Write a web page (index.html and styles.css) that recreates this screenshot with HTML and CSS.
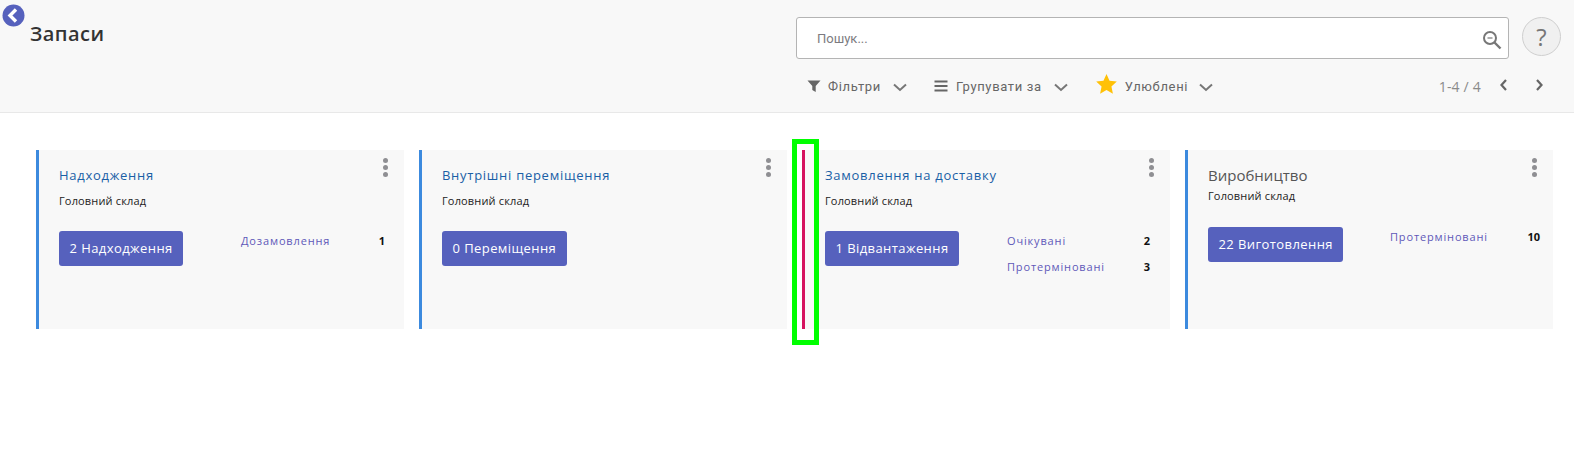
FILE: index.html
```html
<!DOCTYPE html>
<html lang="uk">
<head>
<meta charset="utf-8">
<title>Запаси</title>
<link rel="stylesheet" href="styles.css">
</head>
<body>
<header class="cp">
  <div class="cp-left">
    <svg class="back" viewBox="0 0 23 23" width="23" height="23"><circle cx="11.5" cy="11.5" r="11" fill="#5661bd"/><path d="M14 5.5 L8 11.5 L14 17.5" fill="none" stroke="#fff" stroke-width="3.4" stroke-linejoin="miter"/></svg>
    <h1 class="page-title">Запаси</h1>
  </div>
  <div class="cp-right">
    <div class="search-row">
      <div class="search">
        <span class="placeholder">Пошук...</span>
        <svg class="search-ico" viewBox="0 0 20 20" width="20" height="20"><circle cx="8" cy="8" r="6" fill="none" stroke="#777" stroke-width="2"/><path d="M5.5 8h5" stroke="#777" stroke-width="1.2"/><path d="M12.5 12.5 L18.5 18.5" stroke="#777" stroke-width="2.4"/></svg>
      </div>
      <div class="help">?</div>
    </div>
    <div class="tools">
      <div class="tool tool-filter">
        <svg viewBox="0 0 14 14" width="14" height="14"><path d="M0.5 1.5h13L8.7 7v6L5.3 11V7z" fill="#666"/></svg>
        <span>Фільтри</span>
        <svg class="caret" viewBox="0 0 14 9" width="14" height="9"><path d="M1 1.5 L7 7 L13 1.5" fill="none" stroke="#777" stroke-width="2"/></svg>
      </div>
      <div class="tool tool-group">
        <svg viewBox="0 0 14 12" width="14" height="12"><path d="M0.5 1.5h13M0.5 6h13M0.5 10.500h13" stroke="#666" stroke-width="2.200"/></svg>
        <span>Групувати за</span>
        <svg class="caret" viewBox="0 0 14 9" width="14" height="9"><path d="M1 1.5 L7 7 L13 1.5" fill="none" stroke="#777" stroke-width="2"/></svg>
      </div>
      <div class="tool tool-fav">
        <svg class="star" viewBox="0 0 20 19" width="21" height="20"><path d="M10 0 L12.900 6.400 L19.800 7.200 L14.700 11.900 L16.100 18.800 L10 15.300 L3.900 18.800 L5.300 11.900 L0.200 7.200 L7.100 6.400z" fill="#ffc107"/></svg>
        <span>Улюблені</span>
        <svg class="caret" viewBox="0 0 14 9" width="14" height="9"><path d="M1 1.5 L7 7 L13 1.5" fill="none" stroke="#777" stroke-width="2"/></svg>
      </div>
      <div class="pager">
        <span class="pager-text">1-4 / 4</span>
        <svg viewBox="0 0 9 12" width="9" height="12"><path d="M7 1 L2.500 6 L7 11" fill="none" stroke="#666" stroke-width="2.200"/></svg>
        <svg viewBox="0 0 9 12" width="9" height="12"><path d="M2 1 L6.500 6 L2 11" fill="none" stroke="#666" stroke-width="2.200"/></svg>
      </div>
    </div>
  </div>
</header>
<main class="board">
  <article class="card card-first">
    <div class="dots"><i></i><i></i><i></i></div>
    <div class="card-title link">Надходження</div>
    <div class="wh">Головний склад</div>
    <div class="card-body">
      <div class="btn-col"><a class="btn">2 Надходження</a></div>
      <div class="stats">
        <div class="stat"><span>Дозамовлення</span><b>1</b></div>
      </div>
    </div>
  </article>
  <article class="card">
    <div class="dots"><i></i><i></i><i></i></div>
    <div class="card-title link">Внутрішні переміщення</div>
    <div class="wh">Головний склад</div>
    <div class="card-body">
      <div class="btn-col"><a class="btn">0 Переміщення</a></div>
    </div>
  </article>
  <article class="card card-marked">
    <div class="dots"><i></i><i></i><i></i></div>
    <div class="card-title link">Замовлення на доставку</div>
    <div class="wh">Головний склад</div>
    <div class="card-body">
      <div class="btn-col"><a class="btn">1 Відвантаження</a></div>
      <div class="stats">
        <div class="stat"><span>Очікувані</span><b>2</b></div>
        <div class="stat"><span>Протерміновані</span><b>3</b></div>
      </div>
    </div>
    <div class="highlight"></div>
  </article>
  <article class="card card-plain">
    <div class="dots"><i></i><i></i><i></i></div>
    <div class="card-title plain">Виробництво</div>
    <div class="wh">Головний склад</div>
    <div class="card-body">
      <div class="btn-col"><a class="btn">22 Виготовлення</a></div>
      <div class="stats">
        <div class="stat"><span>Протерміновані</span><b>10</b></div>
      </div>
    </div>
  </article>
</main>
</body>
</html>
```
FILE: styles.css
```css
* { box-sizing: border-box; }
html, body { margin: 0; padding: 0; background: #fff; }
body { font-family: "Open Sans", "Noto Sans", sans-serif; color: #333; height: 457px; overflow: hidden; }

.cp {
  display: flex;
  height: 113px;
  background: #f8f8f8;
  border-bottom: 1px solid #e8e8e8;
}
.cp-left { position: relative; width: 796px; padding: 21px 0 0 30px; }
.back { position: absolute; left: 2px; top: 4px; display: block; }
.page-title { margin: 0; font-size: 20px; line-height: 26px; font-weight: 600; color: #333; letter-spacing: 0.45px; }

.cp-right { flex: 1; padding: 17px 13px 0 0; }
.search-row { display: flex; gap: 13px; }
.search {
  flex: 1;
  height: 42px;
  background: #fff;
  border: 1px solid #b4b4b4;
  border-radius: 3px;
  display: flex;
  align-items: center;
  justify-content: space-between;
  padding: 0 6px 0 20px;
}
.placeholder { font-family: Roboto, sans-serif; font-size: 13px; color: #7c7b80; letter-spacing: 0; }
.search-ico { margin-top: 4px; }
.help {
  width: 39px; height: 39px;
  border-radius: 50%;
  background: #f0f0f0;
  border: 1px solid #cfcfcf;
  display: flex; align-items: center; justify-content: center;
  font-family: "Open Sans", sans-serif; font-size: 24px; color: #777;
}
.tools { display: flex; align-items: center; height: 20px; margin-top: 17px; padding-left: 11px; font-family: Roboto, sans-serif; font-size: 13px; letter-spacing: 0.65px; color: #666; }
.tool { display: flex; align-items: center; }
.tool span { margin-left: 7px; }
.tool .caret { margin-left: 12px; margin-top: 2px; }
.tool-group { margin-left: 27px; }
.tool-group span { margin-left: 8px; }
.tool-fav { margin-left: 28px; }
.tool-fav span { margin-left: 8px; }
.tool-fav .caret { margin-left: 11px; }
.star { margin-top: -4px; }
.pager { margin-left: auto; display: flex; align-items: center; margin-right: 17px; }
.pager-text { font-family: "Open Sans", sans-serif; font-size: 14px; letter-spacing: 0.2px; color: #8a8a8a; margin-right: 18px; }
.pager svg { margin-top: -3px; }
.pager svg + svg { margin-left: 27px; }

.board {
  display: grid;
  grid-template-columns: repeat(4, 368px);
  column-gap: 15px;
  padding: 37px 0 0 36px;
}
.card {
  position: relative;
  height: 179px;
  background: #f8f8f8;
  border-left: 3px solid #3c8ade;
  padding: 0 20px;
}
.card-marked { border-left: 0; padding-left: 23px; }
.card-marked::before { content: ""; position: absolute; left: 0; top: 0; bottom: 0; width: 3px; background: #d6125f; }
.dots { position: absolute; top: 8px; right: 16px; display: flex; flex-direction: column; gap: 2px; }
.dots i { display: block; width: 5px; height: 5px; border-radius: 50%; background: #8f8f93; }
.card-title { padding-top: 15px; line-height: 20px; }
.link { font-size: 13px; letter-spacing: 0.72px; color: #1a5fa6; }
.plain { padding-top: 14px; font-size: 15px; color: #555; line-height: 22px; }
.wh { margin-top: 8px; font-size: 11px; line-height: 15px; letter-spacing: 0.15px; color: #222; }
.card-plain .wh { margin-top: 2px; }
.card-body { display: flex; margin-top: 23px; }
.card-plain .card-body { margin-top: 24px; }
.btn-col { flex: 0 0 182px; }
.btn {
  display: inline-block;
  height: 35px; line-height: 35px;
  padding: 0 10.5px;
  background: #5661bd;
  border-radius: 3px;
  color: #fff;
  font-size: 13px;
  font-weight: 500;
  letter-spacing: 0.42px;
}
.stats { flex: 1; display: flex; flex-direction: column; gap: 8px; }
.stat { display: flex; justify-content: space-between; align-items: center; height: 18px; font-size: 11px; letter-spacing: 0.85px; color: #5f58b8; }
.stat b { color: #111; font-weight: 700; letter-spacing: 0; }
.card-first .stats { margin-right: -1px; }
.card-plain .stats { margin-right: -7px; }
.highlight {
  position: absolute;
  left: -10px; top: -11px;
  width: 27px; height: 206px;
  border: 5px solid #00ff00;
}
```
